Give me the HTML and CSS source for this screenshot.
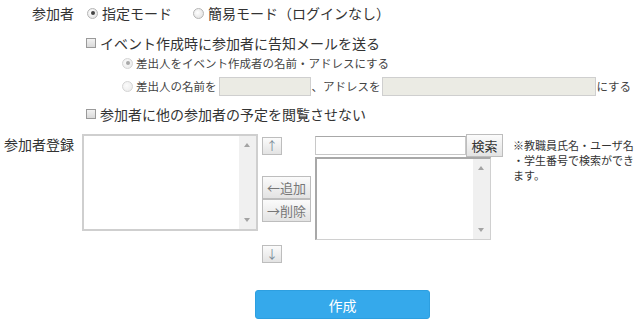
FILE: index.html
```html
<html>
<head>
<meta charset="utf-8">
<link rel="stylesheet" href="styles.css">
</head>
<body>
<div class="form">

<div class="row row-mode">
  <div class="label">参加者</div>
  <div class="field">
    <span class="opt"><span class="radio checked"></span>指定モード</span>
    <span class="opt opt2"><span class="radio"></span>簡易モード（ログインなし）</span>
  </div>
</div>

<div class="opts">
  <div class="chk-row"><span class="check"></span>イベント作成時に参加者に告知メールを送る</div>
  <div class="sub sub1"><span class="radio off checked"></span>差出人をイベント作成者の名前・アドレスにする</div>
  <div class="sub sub2"><span class="radio off"></span>差出人の名前を<span class="box box-name"></span>、アドレスを<span class="box box-addr"></span>にする</div>
  <div class="chk-row chk-last"><span class="check"></span>参加者に他の参加者の予定を閲覧させない</div>
</div>

<div class="row row-members">
  <div class="label">参加者登録</div>
  <div class="list list-left">
    <div class="list-body"></div>
    <div class="scroll"><span class="arr-up"></span><span class="arr-down"></span></div>
  </div>
  <div class="moves">
    <div class="btn btn-sq btn-up">↑</div>
    <div class="btn btn-wide btn-add">←追加</div>
    <div class="btn btn-wide">→削除</div>
    <div class="btn btn-sq btn-down">↓</div>
  </div>
  <div class="search-col">
    <div class="search-row">
      <span class="search-input"></span>
      <div class="btn btn-search">検索</div>
    </div>
    <div class="list list-right">
      <div class="list-body"></div>
      <div class="scroll"><span class="arr-up"></span><span class="arr-down"></span></div>
    </div>
  </div>
  <div class="note">※教職員氏名・ユーザ名<br>・学生番号で検索ができ<br>ます。</div>
</div>

<div class="submit">
  <div class="create">作成</div>
</div>

</div>
</body>
</html>
```

FILE: styles.css
```css
body {
margin: 0;
font-family: "Noto Sans CJK JP", "Noto Sans", sans-serif;
font-size: 14px;
color: #333;
background: white;
}

.form { width: 640px; }

.row { display: flex; align-items: flex-start; }

.label {
width: 74px;
text-align: right;
line-height: 20px;
flex: none;
}

/* mode row */
.row-mode { padding-top: 3px; height: 20px; }
.row-mode .field { display: flex; line-height: 20px; margin-left: 13px; }
.opt { display: flex; align-items: center; }
.opt2 { margin-left: 21px; }
.opt .radio { margin-right: 4px; }

.radio {
display: inline-block;
width: 11px; height: 11px;
box-sizing: border-box;
border: 1px solid #b5b5b5;
border-radius: 50%;
background: radial-gradient(circle at 40% 40%, #ffffff, #dcdcdc);
position: relative;
flex: none;
}
.radio.checked::after {
content: "";
position: absolute;
left: 2.5px; top: 2.5px;
width: 4px; height: 4px;
border-radius: 50%;
background: #444;
}
.radio.off { border-color: #d4d4d4; background: radial-gradient(circle at 40% 40%, #fbfbfb, #e8e8e8); }
.radio.off.checked::after { background: #a8a8a8; }

.check {
display: inline-block;
width: 10px; height: 10px;
box-sizing: border-box;
border: 1px solid #9a9a9a;
background: linear-gradient(#f2f2f2, #d9d9d9);
margin-right: 4px;
flex: none;
}

/* options */
.opts { margin-left: 86px; margin-top: 10px; }
.chk-row { display: flex; align-items: center; height: 20px; line-height: 20px; }
.sub { display: flex; align-items: center; padding-left: 36px; font-size: 11.5px; color: #444; }
.sub .radio { margin-right: 3px; }
.sub1 { margin-top: 0; height: 20px; }
.sub2 { margin-top: 3px; height: 20px; }
.chk-last { margin-top: 8px; }

.box {
display: inline-block;
height: 19px;
box-sizing: border-box;
border: 1px solid #cfcfcf;
background: #ebebe4;
}
.box-name { width: 92px; margin: 0 1px 0 2px; }
.box-addr { width: 214px; margin: 0 1px 0 1px; }

/* members */
.row-members { margin-top: 10px; }
.row-members .label { margin-right: 8px; }

.list {
display: flex;
box-sizing: border-box;
border: 1px solid #c6c6c6;
border-width: 2px 1px 1px 2px;
background: white;
}
.list-left { width: 176px; height: 97px; border-color: #cfcfcf; border-width: 2px; }
.list-right { width: 176px; height: 83px; border-color: #a8a8a8 #d0d0d0 #d0d0d0 #a8a8a8; }
.list-body { flex: 1; }
.scroll {
width: 17px;
background: #f0f0f0;
position: relative;
}
.arr-up, .arr-down {
position: absolute;
left: 5px;
width: 0; height: 0;
border-left: 3.5px solid transparent;
border-right: 3.5px solid transparent;
}
.arr-up { top: 7px; border-bottom: 4px solid #a3a3a3; }
.arr-down { bottom: 7px; border-top: 4px solid #a3a3a3; }

.btn {
box-sizing: border-box;
border: 1px solid #bdbdbd;
background: linear-gradient(#fbfbfb, #e3e3e3);
color: #7a8a98;
text-align: center;
}
.moves { margin-left: 4px; display: flex; flex-direction: column; align-items: flex-start; }
.btn-sq { width: 20px; height: 18px; line-height: 16px; font-size: 12px; }
.btn-up { margin-top: 3px; }
.btn-wide { width: 49px; height: 23px; line-height: 21px; font-size: 13px; color: #777; }
.btn-add { margin-top: 21px; }
.btn-down { margin-top: 23px; }

.search-col { margin-left: 4px; }
.search-row { display: flex; align-items: center; height: 23px; }
.search-input {
display: inline-block;
width: 151px; height: 19px;
box-sizing: border-box;
border: 1px solid #c8c8c8;
border-top-color: #a8a8a8;
}
.btn-search { width: 37px; height: 23px; line-height: 21px; font-size: 13px; color: #333; }

.note {
margin-left: 10px;
margin-top: 4px;
font-size: 11px;
line-height: 15px;
white-space: nowrap;
}

.submit { padding-left: 255px; margin-top: 27px; }
.create {
width: 175px;
height: 29px;
line-height: 29px;
border-radius: 3px;
background: #35a9eb;
border: 1px solid #2d9fe0;
box-sizing: border-box;
color: white;
text-align: center;
font-size: 14px;
}
```
